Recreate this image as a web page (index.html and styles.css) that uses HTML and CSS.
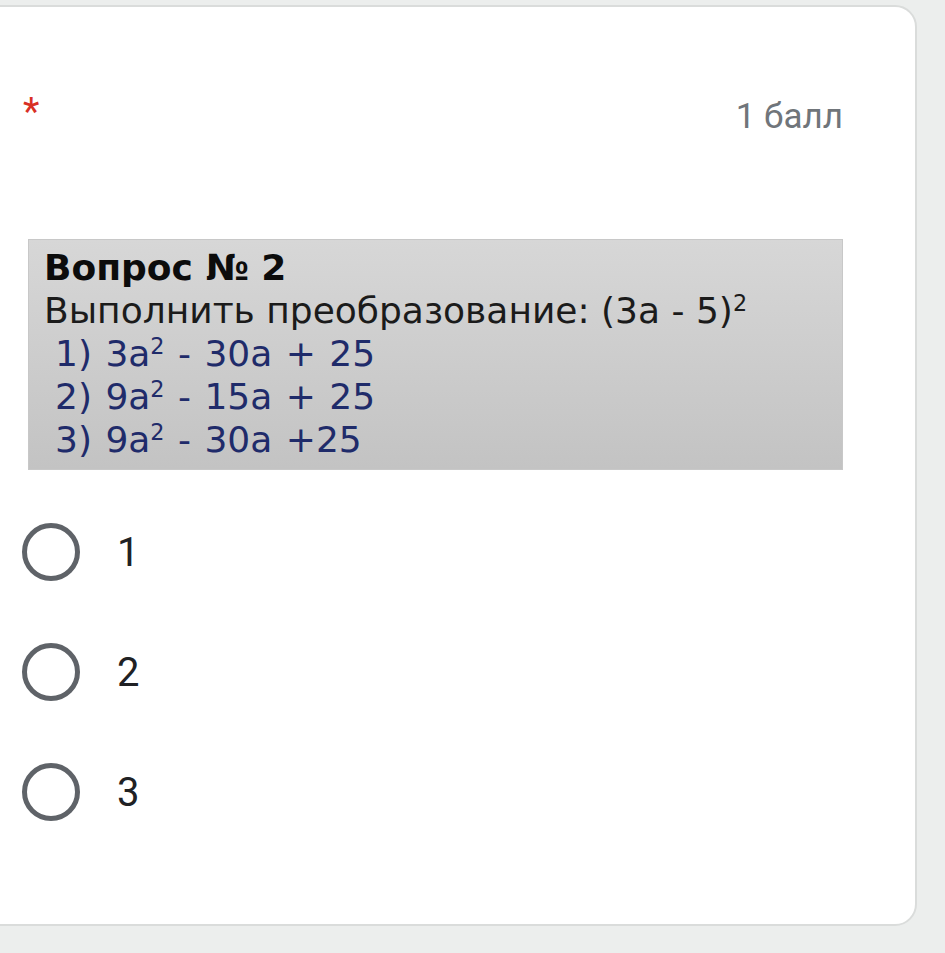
FILE: index.html
```html
<!DOCTYPE html>
<html lang="ru">
<head>
    <meta charset="UTF-8">
    <meta name="viewport" content="width=device-width, initial-scale=1.0">
    <title>Вопрос № 2</title>
    <link rel="stylesheet" href="styles.css">
</head>
<body>
<div class="card">
    <!-- Заголовок вопроса -->
    <div class="question-head">
        <span class="required">*</span>
        <span class="points">1 балл</span>
    </div>

    <!-- Картинка с заданием -->
    <div class="task-image">
        <div class="task-title">Вопрос № 2</div>
        <div class="task-text">Выполнить преобразование: (3a - 5)<sup>2</sup></div>
        <div class="task-option">1) 3a<sup>2</sup> - 30a + 25</div>
        <div class="task-option">2) 9a<sup>2</sup> - 15a + 25</div>
        <div class="task-option">3) 9a<sup>2</sup> - 30a +25</div>
    </div>

    <!-- Варианты ответа -->
    <div class="answers">
        <label class="answer"><span class="radio"></span><span class="answer-label">1</span></label>
        <label class="answer"><span class="radio"></span><span class="answer-label">2</span></label>
        <label class="answer"><span class="radio"></span><span class="answer-label">3</span></label>
    </div>
</div>
</body>
</html>
```

FILE: styles.css
```css
body {
    margin: 0;
    padding: 0;
    background-color: #eceeed;
    font-family: Roboto, Arial, sans-serif;
    overflow: hidden;
}

.card {
    box-sizing: border-box;
    margin: 5px 28px 0 -24px;
    height: 921px;
    background-color: #fff;
    border: 2px solid #dadcdb;
    border-radius: 22px;
    padding: 86px 72px 0 44px;
}

.question-head {
    display: flex;
    justify-content: space-between;
    align-items: flex-start;
    height: 48px;
}

.required {
    color: #d93025;
    font-size: 38px;
    line-height: 38px;
    margin-left: 1px;
}

.points {
    color: #70757a;
    font-size: 35px;
    line-height: 48px;
}

.task-image {
    box-sizing: border-box;
    margin: 98px 0 0 6px;
    height: 231px;
    border: 1px solid #c8c8c8;
    background: linear-gradient(#d7d7d7, #c3c3c3);
    padding: 6px 0 0 15px;
    font-family: "DejaVu Sans", Verdana, sans-serif;
    font-size: 36px;
    line-height: 43px;
}

.task-image sup {
    font-size: 0.62em;
    line-height: 0;
    vertical-align: 0.55em;
}

.task-title {
    font-weight: bold;
    color: #0c0c0c;
}

.task-text {
    color: #1b1b1b;
}

.task-option {
    color: #1f2b6a;
    padding-left: 11px;
    word-spacing: 2px;
}

.answers {
    margin-top: 53px;
    display: flex;
    flex-direction: column;
    gap: 62px;
}

.answer {
    display: flex;
    align-items: center;
    height: 58px;
}

.radio {
    width: 58px;
    height: 58px;
    box-sizing: border-box;
    border: 5px solid #5f6368;
    border-radius: 50%;
}

.answer-label {
    margin-left: 37px;
    color: #202124;
    font-size: 40px;
}
```
